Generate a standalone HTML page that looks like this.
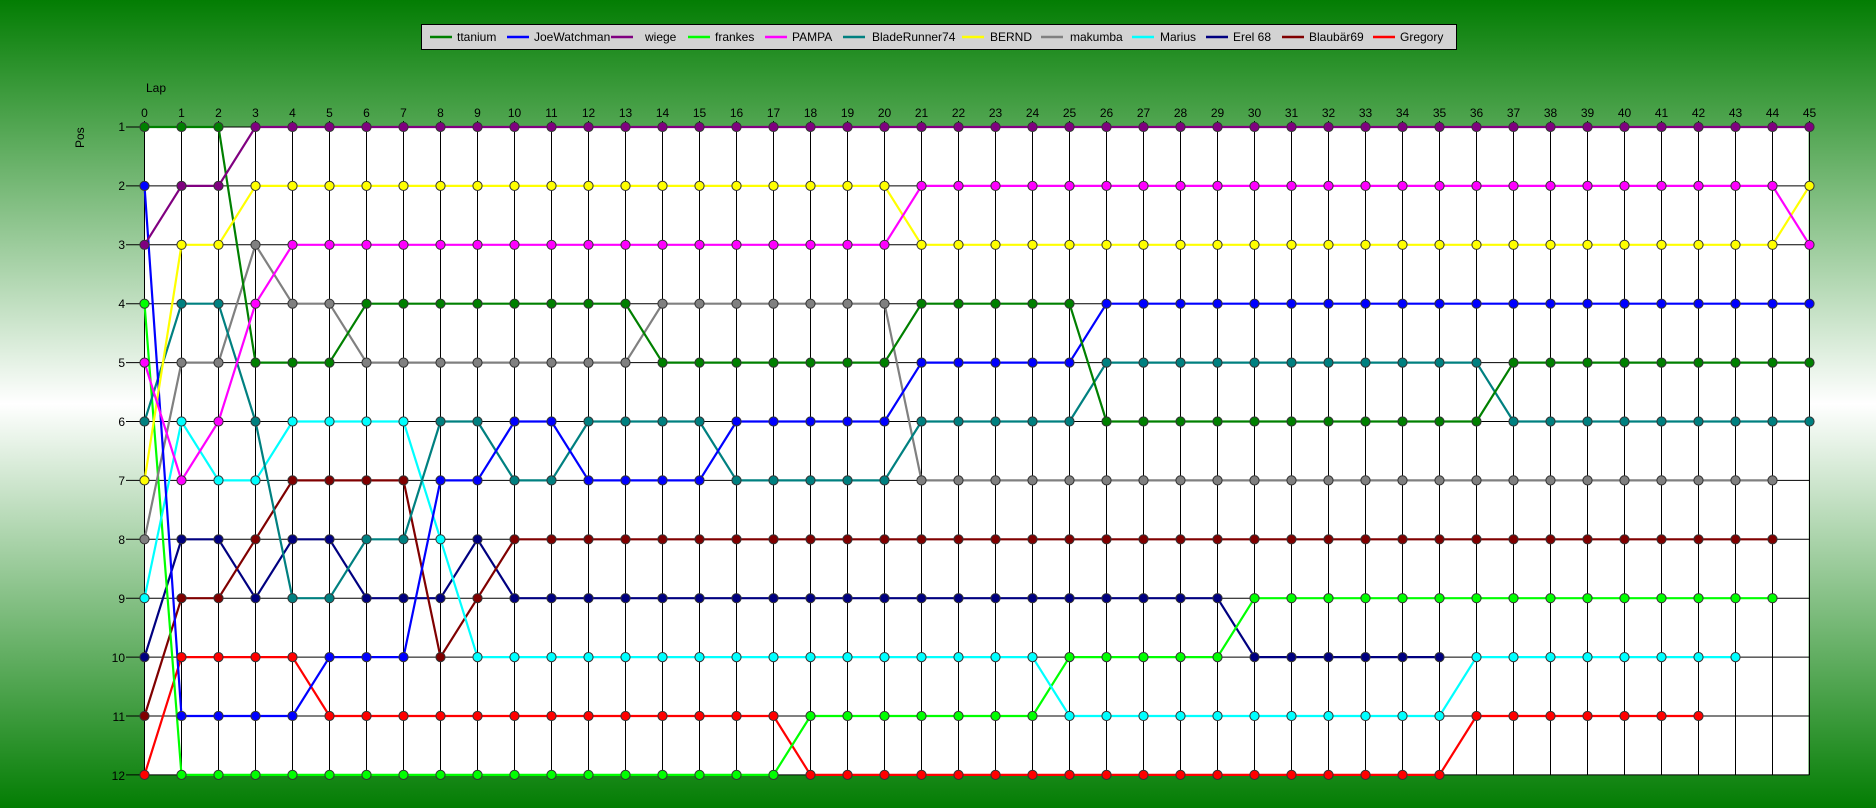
<!DOCTYPE html>
<html><head><meta charset="utf-8">
<style>
html,body{margin:0;padding:0;}
body{width:1876px;height:808px;overflow:hidden;background:linear-gradient(#037d03 0%,#ffffff 50%,#037d03 100%);font-family:"Liberation Sans",sans-serif;}
svg{position:absolute;left:0;top:0;}
</style></head><body>
<svg id="c" width="1876" height="808" xmlns="http://www.w3.org/2000/svg" font-family="Liberation Sans, sans-serif" font-size="12">
<rect x="421.5" y="24.5" width="1035" height="25" fill="#d3d3d3" stroke="#000" stroke-width="1"/>
<g stroke-width="2.5">
<line x1="430" y1="37" x2="452" y2="37" stroke="#008000"/>
<line x1="507" y1="37" x2="529" y2="37" stroke="#0000ff"/>
<line x1="611" y1="37" x2="633" y2="37" stroke="#800080"/>
<line x1="688" y1="37" x2="710" y2="37" stroke="#00ff00"/>
<line x1="765" y1="37" x2="787" y2="37" stroke="#ff00ff"/>
<line x1="843" y1="37" x2="865" y2="37" stroke="#008080"/>
<line x1="962" y1="37" x2="984" y2="37" stroke="#ffff00"/>
<line x1="1041" y1="37" x2="1063" y2="37" stroke="#808080"/>
<line x1="1132" y1="37" x2="1154" y2="37" stroke="#00ffff"/>
<line x1="1206" y1="37" x2="1228" y2="37" stroke="#000080"/>
<line x1="1282" y1="37" x2="1304" y2="37" stroke="#800000"/>
<line x1="1373" y1="37" x2="1395" y2="37" stroke="#ff0000"/>
</g>
<g fill="#000">
<text x="457" y="41">ttanium</text>
<text x="534" y="41">JoeWatchman</text>
<text x="645" y="41">wiege</text>
<text x="715" y="41">frankes</text>
<text x="792" y="41">PAMPA</text>
<text x="872" y="41">BladeRunner74</text>
<text x="990" y="41">BERND</text>
<text x="1070" y="41">makumba</text>
<text x="1160" y="41">Marius</text>
<text x="1233" y="41">Erel 68</text>
<text x="1309" y="41">Blaubär69</text>
<text x="1400" y="41">Gregory</text>
<text x="146" y="92">Lap</text>
<text transform="translate(84,148) rotate(-90)">Pos</text>
</g>
<rect x="144.5" y="127" width="1664" height="648" fill="#fff"/>
<g id="grid" stroke="#000" stroke-width="1"></g>
<g id="labs" fill="#000" text-anchor="middle">
<text x="144.5" y="117">0</text><text x="181.5" y="117">1</text><text x="218.5" y="117">2</text><text x="255.5" y="117">3</text><text x="292.5" y="117">4</text><text x="329.5" y="117">5</text><text x="366.5" y="117">6</text><text x="403.5" y="117">7</text><text x="440.5" y="117">8</text><text x="477.5" y="117">9</text><text x="514.5" y="117">10</text><text x="551.5" y="117">11</text><text x="588.5" y="117">12</text><text x="625.5" y="117">13</text><text x="662.5" y="117">14</text><text x="699.5" y="117">15</text><text x="736.5" y="117">16</text><text x="773.5" y="117">17</text><text x="810.5" y="117">18</text><text x="847.5" y="117">19</text><text x="884.5" y="117">20</text><text x="921.5" y="117">21</text><text x="958.5" y="117">22</text><text x="995.5" y="117">23</text><text x="1032.5" y="117">24</text><text x="1069.5" y="117">25</text><text x="1106.5" y="117">26</text><text x="1143.5" y="117">27</text><text x="1180.5" y="117">28</text><text x="1217.5" y="117">29</text><text x="1254.5" y="117">30</text><text x="1291.5" y="117">31</text><text x="1328.5" y="117">32</text><text x="1365.5" y="117">33</text><text x="1402.5" y="117">34</text><text x="1439.5" y="117">35</text><text x="1476.5" y="117">36</text><text x="1513.5" y="117">37</text><text x="1550.5" y="117">38</text><text x="1587.5" y="117">39</text><text x="1624.5" y="117">40</text><text x="1661.5" y="117">41</text><text x="1698.5" y="117">42</text><text x="1735.5" y="117">43</text><text x="1772.5" y="117">44</text><text x="1809.5" y="117">45</text>
</g>
<g fill="#000" text-anchor="end">
<text x="125" y="131">1</text><text x="125" y="190">2</text><text x="125" y="249">3</text><text x="125" y="308">4</text><text x="125" y="367">5</text><text x="125" y="426">6</text><text x="125" y="485">7</text><text x="125" y="544">8</text><text x="125" y="603">9</text><text x="125" y="662">10</text><text x="125" y="721">11</text><text x="125" y="780">12</text>
</g>
<g id="lines" fill="none" stroke-width="2.2" stroke-linejoin="round"></g>
<g id="dots" stroke="#333" stroke-width="1"></g>
</svg>
<script>
var X=function(l){return 144.5+37*l},Y=function(p){return 127+58.9*(p-1)};
var ns="http://www.w3.org/2000/svg";
function el(t,a,p){var e=document.createElementNS(ns,t);for(var k in a)e.setAttribute(k,a[k]);p.appendChild(e);return e;}
var g=document.getElementById('grid');
for(var l=0;l<=45;l++){el('line',{x1:X(l),y1:121,x2:X(l),y2:Y(12)},g);}
for(var p=1;p<=12;p++){el('line',{x1:126,y1:Y(p),x2:X(45),y2:Y(p)},g);}
function rep(v,n){var a=[];for(var i=0;i<n;i++)a.push(v);return a;}
function s(){var a=[];for(var i=0;i<arguments.length;i+=2)a=a.concat(rep(arguments[i],arguments[i+1]));return a;}
var D=[
["#000080",s(10,1,8,2,9,1,8,2,9,2,9,1,8,1,9,1,9,19,10,6)],
["#800000",[11,9,9,8,7,7,7,7,10,9,8].concat(rep(8,34))],
["#ff0000",[12,10,10,10,10,11].concat(rep(11,12),rep(12,18),rep(11,7))],
["#00ff00",[4].concat(rep(12,17),rep(11,7),rep(10,5),rep(9,15))],
["#00ffff",[9,6,7,7,6,6,6,6,8,10].concat(rep(10,15),rep(11,11),rep(10,8))],
["#808080",[8,5,5,3,4,4].concat(rep(5,8),rep(4,7),rep(7,24))],
["#008080",[6,4,4,6,9,9,8,8,6,6,7,7,6,6,6,6,7,7,7,7,7].concat(rep(6,5),rep(5,11),rep(6,9))],
["#0000ff",[2,11,11,11,11,10,10,10,7,7,6,6,7,7,7,7,6,6,6,6,6].concat(rep(5,5),rep(4,20))],
["#008000",[1,1,1,5,5,5].concat(rep(4,8),rep(5,7),rep(4,5),rep(6,11),rep(5,9))],
["#ffff00",[7,3,3].concat(rep(2,18),rep(3,24),[2])],
["#ff00ff",[5,7,6,4].concat(rep(3,17),rep(2,24),[3])],
["#800080",[3,2,2].concat(rep(1,43))]
];
var L=document.getElementById('lines'),Dt=document.getElementById('dots');
D.forEach(function(d){var pts=d[1].map(function(p,i){return X(i)+','+Y(p)}).join(' ');
 el('polyline',{points:pts,stroke:d[0]},L);});
D.forEach(function(d){d[1].forEach(function(p,i){el('circle',{cx:X(i),cy:Y(p),r:4.6,fill:d[0]},Dt);});});
</script>
</body></html>
